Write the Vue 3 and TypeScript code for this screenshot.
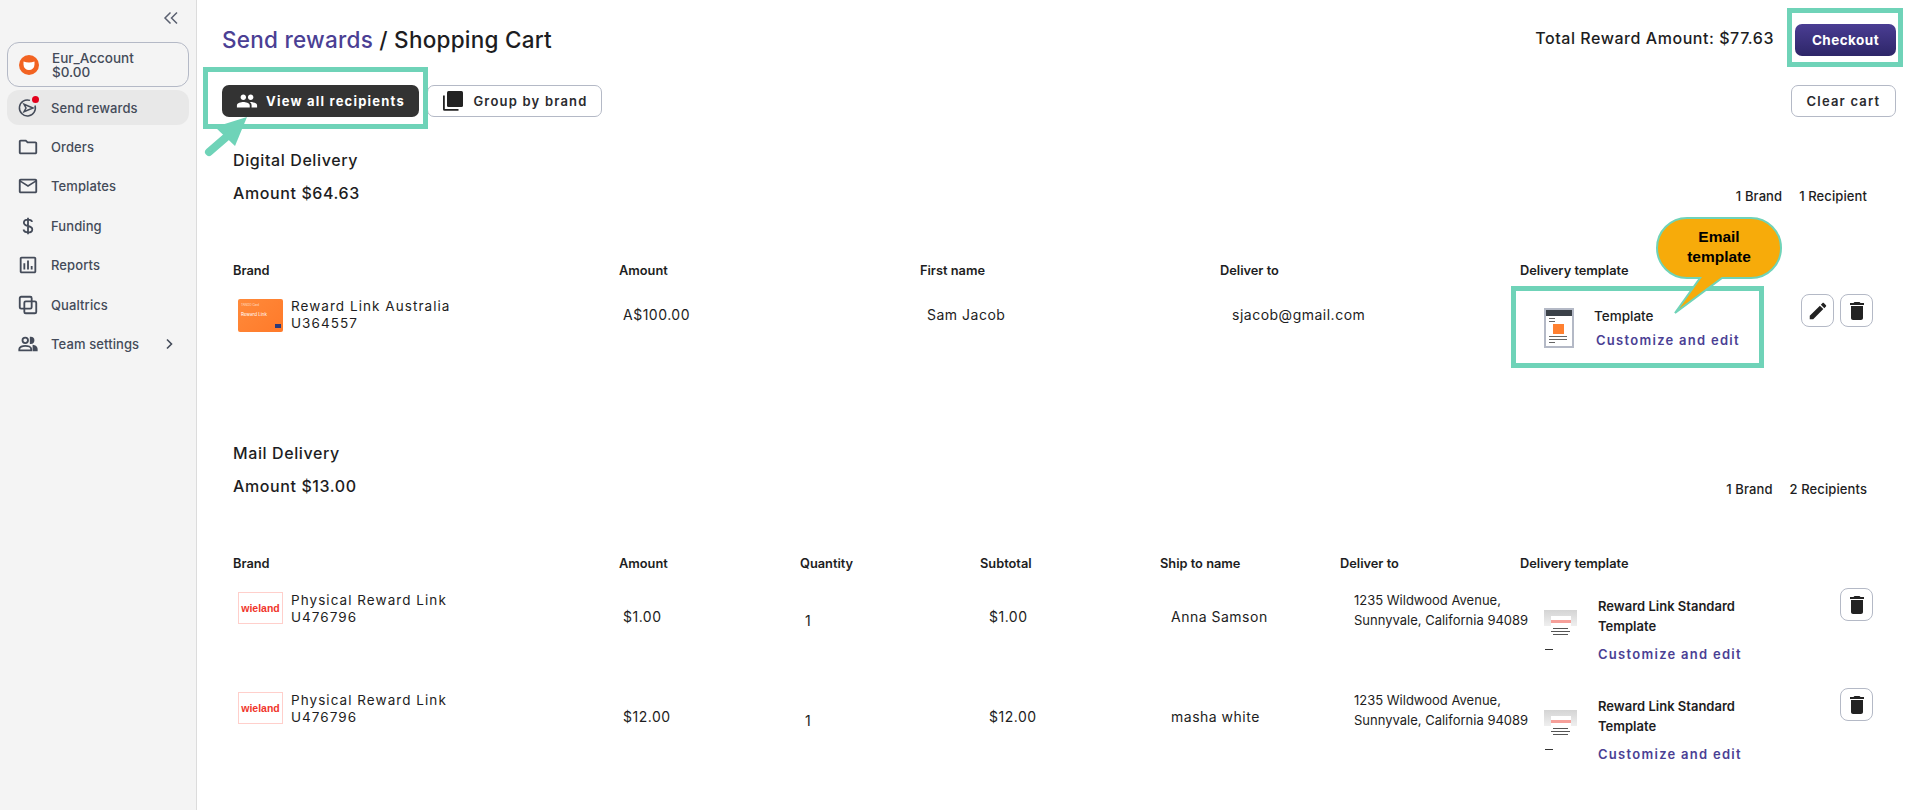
<script setup lang="ts">
interface MailRow {
  amount: string;
  subtotal: string;
  shipTo: string;
}

const navItems = [
  { label: "Orders", icon: "orders" },
  { label: "Templates", icon: "templates" },
  { label: "Funding", icon: "funding" },
  { label: "Reports", icon: "reports" },
  { label: "Qualtrics", icon: "qualtrics" },
  { label: "Team settings", icon: "team" },
];

const digitalHeaders = ["Brand", "Amount", "First name", "Deliver to", "Delivery template"];
const mailHeaders = ["Brand", "Amount", "Quantity", "Subtotal", "Ship to name", "Deliver to", "Delivery template"];

const mailRows: MailRow[] = [
  { amount: "$1.00", subtotal: "$1.00", shipTo: "Anna Samson" },
  { amount: "$12.00", subtotal: "$12.00", shipTo: "masha white" },
];
</script>

<template>
  <div class="page">
    <aside class="sidebar">
      <div class="collapse">
        <svg width="16" height="16" viewBox="0 0 16 16" fill="none" stroke="#5a6070" stroke-width="1.5">
          <path d="M7.5 2.5 2 8l5.5 5.5M14 2.5 8.5 8l5.5 5.5" />
        </svg>
      </div>
      <div class="account">
        <svg class="account-logo" width="20" height="20" viewBox="0 0 20 20">
          <circle cx="10" cy="10" r="10" fill="#f26322" />
          <path d="M4.500 6.500c3.500 1.400 7.500 1.400 11 0v3a5.500 5.500 0 0 1-11 0z" fill="#fff" />
        </svg>
        <div class="account-text">
          <div>Eur_Account</div>
          <div>$0.00</div>
        </div>
      </div>
      <div class="nav-item active">
        <span class="nav-icon">
          <svg width="20" height="20" viewBox="0 0 20 20" fill="none" stroke="#444b59" stroke-width="1.5">
            <path d="M17 7.500A8 8 0 1 1 12 2.400" />
            <path d="M6 6.300 15 10l-9 3.700L8 10z" />
          </svg>
          <i class="red-dot"></i>
        </span>
        Send rewards
      </div>
      <div v-for="item in navItems" :key="item.label" class="nav-item">
        <span class="nav-icon">
          <svg v-if="item.icon === 'orders'" width="22" height="22" viewBox="0 0 24 24" fill="#444b59">
            <path d="M9.170 6l2 2H20v10H4V6h5.170M10 4H4c-1.100 0-1.990.9-1.990 2L2 18c0 1.100.9 2 2 2h16c1.100 0 2-.9 2-2V8c0-1.100-.9-2-2-2h-8l-2-2z" />
          </svg>
          <svg v-else-if="item.icon === 'templates'" width="22" height="22" viewBox="0 0 24 24" fill="#444b59">
            <path d="M20 4H4c-1.100 0-2 .9-2 2v12c0 1.100.9 2 2 2h16c1.100 0 2-.9 2-2V6c0-1.100-.9-2-2-2zm0 14H4V8l8 5 8-5v10zm-8-7L4 6h16l-8 5z" />
          </svg>
          <svg v-else-if="item.icon === 'funding'" width="18" height="18" viewBox="0 0 24 24" fill="none" stroke="#444b59" stroke-width="2.400">
            <path d="M12 1v22M17.500 6.500C17 4.300 15 3.500 12 3.500c-3.200 0-5.500 1.500-5.500 4.200 0 2.700 2.500 3.600 5.500 4.300 3.200.8 5.700 1.700 5.700 4.500 0 2.600-2.500 4-5.700 4-3.300 0-5.500-1.300-6-3.800" />
          </svg>
          <svg v-else-if="item.icon === 'reports'" width="22" height="22" viewBox="0 0 24 24" fill="#444b59">
            <path d="M19 3H5c-1.100 0-2 .9-2 2v14c0 1.100.9 2 2 2h14c1.100 0 2-.9 2-2V5c0-1.100-.9-2-2-2zm0 16H5V5h14v14zM7 10h2v7H7zm4-3h2v10h-2zm4 6h2v4h-2z" />
          </svg>
          <svg v-else-if="item.icon === 'qualtrics'" width="22" height="22" viewBox="0 0 24 24" fill="none" stroke="#444b59" stroke-width="2">
            <path d="M16 8V4.500A1.500 1.500 0 0 0 14.500 3h-10A1.500 1.500 0 0 0 3 4.500v10A1.500 1.500 0 0 0 4.500 16H8" />
            <path d="M8 16v-6.500A1.500 1.500 0 0 1 9.500 8h10A1.500 1.500 0 0 1 21 9.500v10a1.500 1.500 0 0 1-1.500 1.500h-10A1.500 1.500 0 0 1 8 19.500V16h6.500a1.500 1.500 0 0 0 1.500-1.500V8" />
          </svg>
          <svg v-else width="22" height="22" viewBox="0 0 24 24" fill="none" stroke="#444b59" stroke-width="2">
            <circle cx="9" cy="8" r="3" />
            <path d="M2.500 19v-1.500c0-2.200 3.500-3.500 6.500-3.500s6.500 1.300 6.500 3.500V19z" />
            <path d="M15 5c2 0 3 1.300 3 3s-1 3-3 3z" fill="#444b59" />
            <path d="M18 14c2 .5 3.500 1.600 3.500 3.500V19H18z" fill="#444b59" />
          </svg>
        </span>
        {{ item.label }}
        <svg v-if="item.icon === 'team'" class="chevron" width="12" height="12" viewBox="0 0 12 12" fill="none" stroke="#444b59" stroke-width="1.600">
          <path d="M4 1.500 8.500 6 4 10.500" />
        </svg>
      </div>
    </aside>

    <main class="main">
      <div class="top-row">
        <h1 class="title"><span class="crumb">Send rewards</span> / Shopping Cart</h1>
        <div class="total">Total Reward Amount: $77.63</div>
        <div class="marked">
          <button class="btn-checkout">Checkout</button>
          <div class="teal-box checkout-box"></div>
        </div>
      </div>

      <div class="toolbar">
        <div class="marked">
          <button class="btn btn-dark">
            <svg width="22" height="22" viewBox="0 0 24 24" fill="#fff">
              <path d="M16 11c1.660 0 2.990-1.340 2.990-3S17.660 5 16 5c-1.660 0-3 1.340-3 3s1.340 3 3 3zm-8 0c1.660 0 2.990-1.340 2.990-3S9.660 5 8 5C6.340 5 5 6.340 5 8s1.340 3 3 3zm0 2c-2.330 0-7 1.170-7 3.500V19h14v-2.500c0-2.330-4.670-3.500-7-3.500zm8 0c-.29 0-.62.02-.97.05 1.160.84 1.970 1.970 1.970 3.450V19h6v-2.500c0-2.330-4.670-3.500-7-3.500z" />
            </svg>
            View all recipients
          </button>
          <div class="teal-box view-box"></div>
          <svg class="arrow" width="50" height="42" viewBox="0 0 50 42">
            <path d="M43 1 11 11l20 19z" fill="#6fd3b8" />
            <path d="M27 17 5 36" stroke="#6fd3b8" stroke-width="8" stroke-linecap="round" />
          </svg>
        </div>
        <button class="btn btn-outline">
          <svg width="24" height="24" viewBox="0 0 24 24" fill="#222">
            <path d="M2 6.500h1.800V20h13.700v1.800H3.500A1.500 1.500 0 0 1 2 20.300z" />
            <path d="M6 3.500A1.500 1.500 0 0 1 7.500 2h13A1.500 1.500 0 0 1 22 3.500v13a1.500 1.500 0 0 1-1.500 1.500h-13A1.500 1.500 0 0 1 6 16.500z" />
          </svg>
          Group by brand
        </button>
        <button class="btn btn-outline btn-clear">Clear cart</button>
      </div>

      <section class="delivery digital">
        <h2 class="section-title">Digital Delivery</h2>
        <div class="amount-row">
          <h2 class="section-title">Amount $64.63</h2>
          <div class="counts"><span>1 Brand</span><span>1 Recipient</span></div>
        </div>
        <div class="grid grid-digital grid-head">
          <div v-for="h in digitalHeaders" :key="h">{{ h }}</div>
        </div>
        <div class="grid grid-digital row-digital">
          <div class="brand">
            <div class="card-orange">
              <span class="card-top">TANGO Card</span>
              <span class="card-name">Reward Link</span>
              <i class="card-flag"></i>
            </div>
            <div>
              <div>Reward Link Australia</div>
              <div>U364557</div>
            </div>
          </div>
          <div class="cell-value value-amount">A$100.00</div>
          <div class="cell-value value-first">Sam Jacob</div>
          <div class="cell-value value-email">sjacob@gmail.com</div>
          <div class="template template-digital marked">
            <div class="thumb thumb-email">
              <i class="t-head"></i>
              <i class="t-line t-short"></i>
              <i class="t-line t-short"></i>
              <i class="t-card"></i>
              <i class="t-line"></i>
              <i class="t-line"></i>
              <i class="t-line t-short"></i>
            </div>
            <div class="template-text">
              <div class="template-plain">Template</div>
              <a class="customize">Customize and edit</a>
            </div>
            <div class="teal-box template-box"></div>
            <div class="callout">
              <svg width="132" height="100" viewBox="0 0 132 100">
                <path d="M33 2h64a30 30 0 0 1 0 60H68L21 97 46 62H33a30 30 0 0 1 0-60z" fill="#f7ab0a" stroke="#6fd3b8" stroke-width="2" />
              </svg>
              <span class="callout-text">Email<br />template</span>
            </div>
          </div>
          <div class="actions">
            <button class="icon-btn">
              <svg width="22" height="22" viewBox="0 0 24 24" fill="#222">
                <path d="M3 17.250V21h3.750L17.810 9.940l-3.750-3.750L3 17.250zM20.710 7.040c.39-.39.39-1.020 0-1.410l-2.340-2.340c-.39-.39-1.020-.39-1.410 0l-1.830 1.830 3.750 3.750 1.830-1.830z" />
              </svg>
            </button>
            <button class="icon-btn">
              <svg width="24" height="24" viewBox="0 0 24 24" fill="#222">
                <path d="M6 19c0 1.100.9 2 2 2h8c1.100 0 2-.9 2-2V7H6v12zM19 4h-3.500l-1-1h-5l-1 1H5v2h14V4z" />
              </svg>
            </button>
          </div>
        </div>
      </section>

      <section class="delivery mail">
        <h2 class="section-title">Mail Delivery</h2>
        <div class="amount-row">
          <h2 class="section-title">Amount $13.00</h2>
          <div class="counts"><span>1 Brand</span><span>2 Recipients</span></div>
        </div>
        <div class="grid grid-mail grid-head">
          <div v-for="h in mailHeaders" :key="h">{{ h }}</div>
        </div>
        <div v-for="row in mailRows" :key="row.shipTo" class="grid grid-mail row-mail">
          <div class="brand">
            <div class="card-wieland"><span>wieland</span></div>
            <div>
              <div>Physical Reward Link</div>
              <div>U476796</div>
            </div>
          </div>
          <div class="cell-value mail-value value-amount">{{ row.amount }}</div>
          <div class="cell-value mail-qty">1</div>
          <div class="cell-value mail-value value-sub">{{ row.subtotal }}</div>
          <div class="cell-value mail-value value-ship">{{ row.shipTo }}</div>
          <div class="address">1235 Wildwood Avenue,<br />Sunnyvale, California 94089</div>
          <div class="template template-mail">
            <div class="thumb thumb-letter">
              <i class="l-top"><b></b></i>
              <i class="l-bar"></i>
              <i class="l-bar l-wide"></i>
              <i class="l-bar"></i>
              <i class="l-dash"></i>
            </div>
            <div class="template-text">
              <div class="template-name">Reward Link Standard<br />Template</div>
              <a class="customize">Customize and edit</a>
            </div>
          </div>
          <div class="actions actions-mail">
            <button class="icon-btn">
              <svg width="24" height="24" viewBox="0 0 24 24" fill="#222">
                <path d="M6 19c0 1.100.9 2 2 2h8c1.100 0 2-.9 2-2V7H6v12zM19 4h-3.500l-1-1h-5l-1 1H5v2h14V4z" />
              </svg>
            </button>
          </div>
        </div>
      </section>
    </main>
  </div>
</template>

<style>
html,
body {
  margin: 0;
  background: #fff;
}
</style>

<style scoped>
.page {
  display: flex;
  width: 1913px;
  height: 810px;
  overflow: hidden;
  font-family: Inter, "Liberation Sans", sans-serif;
  color: #1d1d22;
}

.sidebar {
  width: 182px;
  flex-shrink: 0;
  background: #f4f4f4;
  border-right: 1px solid #dcdcdc;
  padding: 0 7px;
}

.collapse {
  display: flex;
  justify-content: flex-end;
  padding: 10px 10px 0 0;
  height: 32px;
}

.account {
  display: flex;
  align-items: center;
  height: 43px;
  border: 1px solid #b4b9c6;
  border-radius: 12px;
  padding-left: 11px;
  gap: 13px;
  font-size: 13.500px;
  font-weight: 500;
  line-height: 14px;
  color: #444b59;
}

.account-logo {
  flex-shrink: 0;
}

.nav-item {
  display: flex;
  align-items: center;
  height: 35px;
  margin-bottom: 4.600px;
  padding-left: 10px;
  border-radius: 12px;
  font-size: 13px;
  font-weight: 500;
  letter-spacing: 0.1px;
  color: #444b59;
}

.nav-item.active {
  background: #e8e8e8;
  margin-top: 3px;
  margin-bottom: 4px;
}

.nav-icon {
  position: relative;
  display: flex;
  align-items: center;
  justify-content: center;
  width: 22px;
  margin-right: 12px;
}

.red-dot {
  position: absolute;
  top: -2px;
  right: 0;
  width: 7px;
  height: 7px;
  border-radius: 50%;
  background: #e3001b;
}

.chevron {
  margin-left: auto;
  margin-right: 14px;
}

.main {
  flex: 1;
  min-width: 0;
  padding: 24px 17px 0 25px;
}

.top-row {
  display: flex;
  align-items: center;
  height: 32px;
}

.title {
  flex: 1;
  margin: -2px 0 0;
  font-size: 22.500px;
  font-weight: 500;
  letter-spacing: 0.25px;
  color: #1d1d22;
}

.crumb {
  color: #4b3f94;
}

.total {
  margin-right: 21px;
  margin-top: -4px;
  font-size: 16px;
  font-weight: 500;
  letter-spacing: 0.55px;
}

.marked {
  position: relative;
}

.btn-checkout {
  display: block;
  width: 101px;
  height: 32px;
  border: 0;
  border-radius: 7px;
  background: linear-gradient(#4a3d93, #2d2668);
  color: #fff;
  font-family: inherit;
  font-size: 13.500px;
  font-weight: 700;
  letter-spacing: 0.45px;
}

.teal-box {
  position: absolute;
  border: 5px solid #6fd3b8;
  pointer-events: none;
}

.checkout-box {
  inset: -16px -7px -11px -8px;
}

.view-box {
  inset: -18px -9px -12px -19px;
}

.arrow {
  position: absolute;
  left: -18px;
  top: 31px;
}

.toolbar {
  display: flex;
  margin-top: 29px;
  gap: 8px;
}

.btn {
  display: flex;
  align-items: center;
  justify-content: center;
  height: 32px;
  border-radius: 7px;
  font-family: inherit;
  font-size: 13px;
  font-weight: 600;
  letter-spacing: 1.2px;
  gap: 8px;
}

.btn-dark {
  width: 197px;
  border: 0;
  background: #333;
  color: #fff;
  font-weight: 700;
}

.btn-outline {
  width: 175px;
  border: 1px solid #b4b9c6;
  background: #fff;
  color: #2a2a2e;
}

.btn-clear {
  width: 105px;
  margin-left: auto;
}

.delivery {
  padding-left: 11px;
}

.digital {
  margin-top: 33px;
}

.mail {
  margin-top: 75px;
}

.section-title {
  margin: 0;
  font-size: 16px;
  font-weight: 500;
  letter-spacing: 0.6px;
  line-height: 20px;
  color: #1d1d22;
}

.amount-row {
  display: flex;
  justify-content: space-between;
  align-items: flex-start;
  margin-top: 13px;
}

.counts {
  display: flex;
  gap: 17px;
  padding: 5px 29px 0 0;
  font-size: 13px;
  font-weight: 500;
  letter-spacing: 0.1px;
  line-height: 16px;
}

.grid {
  display: grid;
}

.grid-digital {
  grid-template-columns: 386px 301px 300px 300px 276px 1fr;
}

.grid-mail {
  grid-template-columns: 386px 181px 180px 180px 180px 180px 276px 1fr;
}

.grid-head {
  margin-top: 59px;
  font-size: 12.800px;
  font-weight: 600;
  line-height: 16px;
}

.row-digital {
  height: 82px;
  margin-top: 7px;
}

.row-mail {
  height: 100px;
  margin-top: 9px;
  margin-bottom: -9px;
}

.brand {
  display: flex;
  gap: 8px;
  padding: 12px 0 0 5px;
  font-size: 13.500px;
  line-height: 17px;
  letter-spacing: 1.05px;
  white-space: nowrap;
}

.row-mail .brand {
  padding-top: 11px;
}

.card-orange {
  position: relative;
  width: 45px;
  height: 33px;
  margin-top: 1px;
  border-radius: 2px;
  background: linear-gradient(135deg, #ff8a3a, #ff7a2a);
  color: #fff;
  flex-shrink: 0;
}

.card-top {
  position: absolute;
  left: 3px;
  top: 4px;
  font-size: 3px;
  line-height: 4px;
  letter-spacing: 0;
  opacity: 0.7;
}

.card-name {
  position: absolute;
  left: 3px;
  top: 13px;
  font-size: 4.500px;
  line-height: 6px;
  letter-spacing: 0;
}

.card-flag {
  position: absolute;
  right: 2px;
  bottom: 4px;
  width: 6px;
  height: 4px;
  background: #2b3a7a;
}

.card-wieland {
  display: flex;
  align-items: center;
  justify-content: center;
  width: 45px;
  height: 32px;
  box-sizing: border-box;
  flex-shrink: 0;
  border: 1px solid #ffcfcb;
  color: #f0352b;
  font-family: "Liberation Sans", sans-serif;
  font-size: 10.500px;
  font-weight: 700;
  letter-spacing: 0;
}

.cell-value {
  font-size: 14px;
  line-height: 20px;
  padding-top: 19px;
  letter-spacing: 0.5px;
}

.value-amount {
  padding-left: 4px;
}

.value-first {
  padding-left: 7px;
}

.value-email {
  padding-left: 12px;
}

.mail-value {
  padding-top: 26px;
}

.mail-qty {
  padding: 30px 0 0 5px;
}

.value-sub {
  padding-left: 9px;
}

.value-ship {
  padding-left: 11px;
}

.address {
  padding: 9px 0 0 14px;
  font-size: 13px;
  line-height: 20px;
  white-space: nowrap;
}

.template {
  display: flex;
  align-items: flex-start;
}

.template-digital {
  margin-left: -9px;
  height: 82px;
}

.template-mail {
  padding-left: 24px;
}

.thumb {
  flex-shrink: 0;
  box-sizing: border-box;
  display: flex;
  flex-direction: column;
  overflow: hidden;
}

.thumb-email {
  width: 30px;
  height: 40px;
  margin: 22px 0 0 33px;
  border: 2px solid #b4b9c6;
  align-items: flex-start;
}

.thumb-email i {
  display: block;
  margin-top: 2px;
}

.thumb-email .t-head {
  width: 100%;
  height: 6px;
  margin-top: 0;
  background: #3b4148;
}

.t-line {
  width: 18px;
  height: 1px;
  margin-left: 3px;
  background: #666;
}

.t-short {
  width: 6px;
}

.t-card {
  width: 11px;
  height: 10px;
  margin-left: 7px;
  background: #ff8030;
}

.thumb-letter {
  width: 33px;
  height: 42px;
  margin-top: 29px;
  align-items: center;
  gap: 2px;
}

.l-top {
  display: flex;
  align-items: flex-end;
  justify-content: center;
  width: 100%;
  height: 16px;
  background: linear-gradient(#d4d4d4, #efefef);
}

.l-top b {
  display: block;
  width: 20px;
  height: 10px;
  background: linear-gradient(#fff 35%, #f6a09a 35%, #f6a09a 70%, #fff 70%);
}

.l-bar {
  display: block;
  width: 15px;
  height: 1px;
  background: #555;
}

.l-wide {
  width: 19px;
}

.l-dash {
  display: block;
  width: 8px;
  height: 1px;
  margin: 12px 0 0 -24px;
  background: #333;
}

.template-text {
  display: flex;
  flex-direction: column;
}

.template-digital .template-text {
  padding: 20px 0 0 22px;
}

.template-plain {
  font-size: 13.500px;
  font-weight: 500;
  line-height: 20px;
  margin-left: -2px;
}

.template-digital .customize {
  margin-top: 4px;
}

.template-mail .template-text {
  padding: 16px 0 0 21px;
}

.template-name {
  font-size: 13px;
  font-weight: 600;
  line-height: 19.500px;
  white-space: nowrap;
}

.template-mail .customize {
  margin-top: 8px;
}

.customize {
  color: #4b3f94;
  font-size: 13px;
  font-weight: 600;
  line-height: 20px;
  letter-spacing: 1.28px;
  white-space: nowrap;
}

.template-box {
  inset: 0 auto 0 0;
  width: 253px;
  box-sizing: border-box;
}

.callout {
  position: absolute;
  left: 143px;
  top: -70px;
}

.callout svg {
  display: block;
}

.callout-text {
  position: absolute;
  left: 0;
  top: 11px;
  width: 130px;
  text-align: center;
  font-family: "Liberation Sans", sans-serif;
  font-size: 15.500px;
  font-weight: 700;
  line-height: 20px;
  color: #000;
}

.actions {
  display: flex;
  gap: 6px;
  padding: 8px 0 0 5px;
}

.actions-mail {
  padding: 7px 0 0 44px;
}

.icon-btn {
  display: flex;
  align-items: center;
  justify-content: center;
  width: 33px;
  height: 33px;
  padding: 0;
  border: 1px solid #b4b9c6;
  border-radius: 8px;
  background: #fff;
}
</style>
